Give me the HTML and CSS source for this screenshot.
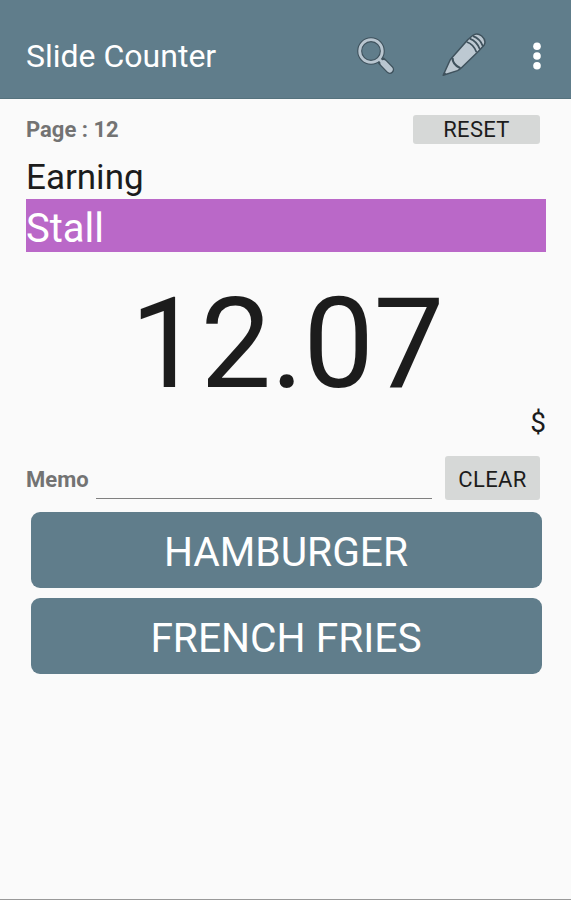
FILE: index.html
```html
<!DOCTYPE html>
<html lang="en">
<head>
    <meta charset="UTF-8">
    <meta name="viewport" content="width=device-width, initial-scale=1.0">
    <title>Slide Counter</title>
    <link rel="stylesheet" href="styles.css">
</head>
<body>

<header class="app-bar">
    <h1>Slide Counter</h1>
    <svg class="icon icon-search" viewBox="0 0 40 40">
        <path d="M26 25.5 L33.8 33.6" stroke="#3f525d" stroke-width="8.6" stroke-linecap="round"/>
        <circle cx="15" cy="15" r="11.3" fill="none" stroke="#3f525d" stroke-width="5"/>
        <path d="M22.5 22.5 L27 27" stroke="#b9c6d0" stroke-width="2.6"/>
        <path d="M27.6 27.2 L33.6 33.4" stroke="#b9c6d0" stroke-width="6.2" stroke-linecap="round"/>
        <circle cx="15" cy="15" r="11.3" fill="none" stroke="#b9c6d0" stroke-width="2.8"/>
    </svg>
    <svg class="icon icon-edit" viewBox="0 0 44 44">
        <g fill="#bdc9d2" stroke="#3f525d" stroke-width="1.5" stroke-linejoin="round">
            <path d="M1.2 42.3 L7.3 28.8 Q8 26.8 9.5 25.3 L26 6.5 L31 2.3 Q35 -0.8 39.7 3 Q45 7.8 41.8 12.6 L36.5 18.3 L19.5 34.8 Q17.5 36.8 15.5 37.6 Z"/>
            <path d="M10.5 25 C10.5 29 13.5 33 18.5 35.3" fill="none" stroke-width="2.2"/>
            <path d="M24.7 9 Q31.5 11 34.5 19.3 M27.8 5.6 Q34.9 8.2 37.9 16.3 M31 3.2 Q38 5.6 40.9 13.3" fill="none" stroke-width="1.8"/>
        </g>
        <path d="M1 42.5 L2.3 38.8 L4.7 41.2 Z" fill="#3f525d"/>
    </svg>
    <svg class="icon icon-more" viewBox="0 0 10 28">
        <circle cx="5" cy="4.3" r="3.8"/>
        <circle cx="5" cy="14" r="3.8"/>
        <circle cx="5" cy="23.7" r="3.8"/>
    </svg>
</header>

<main class="content">
    <div class="page-row">
        <span class="label">Page : 12</span>
        <button type="button" class="btn-small btn-reset">RESET</button>
    </div>

    <div class="counter-title">Earning</div>
    <div class="counter-name">Stall</div>
    <div class="counter-value">12.07</div>
    <div class="counter-unit">$</div>

    <div class="memo-row">
        <label class="label" for="memo">Memo</label>
        <input type="text" id="memo" name="memo">
        <button type="button" class="btn-small btn-clear">CLEAR</button>
    </div>

    <div class="items">
        <button type="button" class="btn-item">HAMBURGER</button>
        <button type="button" class="btn-item">FRENCH FRIES</button>
    </div>
</main>

</body>
</html>
```

FILE: styles.css
```css
* {
    box-sizing: border-box;
}
body {
    font-family: Roboto, sans-serif;
    margin: 0;
    height: 900px;
    background-color: #fafafa;
    color: #1c1c1c;
    border-bottom: 1px solid #999;
    overflow: hidden;
}
button {
    font-family: inherit;
    border: none;
    padding: 0;
}
.app-bar {
    display: flex;
    align-items: center;
    height: 99px;
    padding: 14px 29px 0 26px;
    background-color: #607d8b;
    border-bottom: 1px solid #55727d;
    color: #fff;
}
.app-bar h1 {
    flex: 1;
    margin: 0;
    font-size: 32px;
    font-weight: 400;
    line-height: 40px;
}
.icon {
    display: block;
}
.icon-search {
    width: 40px;
    height: 40px;
    margin-right: 46px;
}
.icon-edit {
    width: 44px;
    height: 44px;
    margin: 0 46px 2px 0;
}
.icon-more {
    width: 10px;
    height: 28px;
    fill: #fff;
}
.content {
    padding: 15px 25px 0 26px;
}
.label {
    font-size: 22px;
    font-weight: 700;
    color: #737373;
}
.page-row {
    display: flex;
    justify-content: space-between;
    align-items: center;
    height: 30px;
    padding-right: 6px;
}
.btn-small {
    background-color: #d6d8d7;
    color: #1c1c1c;
    font-size: 22px;
    border-radius: 3px;
}
.btn-reset {
    width: 127px;
    height: 29px;
    line-height: 29px;
    letter-spacing: 0.3px;
}
.counter-title {
    height: 55px;
    padding-top: 13px;
    font-size: 35px;
    line-height: 42px;
}
.counter-name {
    height: 53px;
    padding-top: 6px;
    font-size: 40px;
    line-height: 48px;
    background-color: #ba68c8;
    color: #fff;
}
.counter-value {
    height: 149px;
    padding: 18px 0 0 2px;
    font-size: 126px;
    line-height: 149px;
    letter-spacing: -0.6px;
    text-align: center;
}
.counter-unit {
    height: 55px;
    padding-top: 4px;
    font-size: 28px;
    line-height: 36px;
    text-align: right;
}
.memo-row {
    display: flex;
    align-items: center;
    height: 44px;
    padding-right: 6px;
}
.memo-row .label {
    padding-top: 2px;
}
.memo-row input {
    flex: 1;
    min-width: 0;
    height: 43px;
    margin: 0 13px 1px 7px;
    padding: 0;
    border: none;
    border-bottom: 1px solid #808080;
    background: none;
    font: inherit;
    font-size: 22px;
}
.btn-clear {
    width: 95px;
    height: 44px;
    padding-top: 2px;
    letter-spacing: 0.4px;
}
.items {
    display: flex;
    flex-direction: column;
    gap: 10px;
    padding: 12px 4.5px 0 4.5px;
}
.btn-item {
    height: 76px;
    padding: 4px 0 0 0;
    border-radius: 9px;
    background-color: #607d8b;
    color: #fff;
    font-size: 40.7px;
}
```
